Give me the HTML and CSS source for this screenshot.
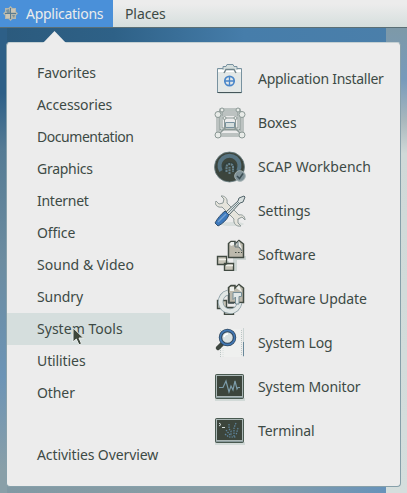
FILE: index.html
```html
<!DOCTYPE html>
<html lang="en">
<head>
<meta charset="utf-8">
<title>Applications</title>
<link rel="stylesheet" href="styles.css">
</head>
<body>
<header class="topbar">
  <div class="tab active">
    <svg class="logo" width="15" height="15" viewBox="0 0 15 15"><path d="M7.500 0 9.500 2H13V5.500L15 7.500 13 9.500V13H9.500L7.500 15 5.500 13H2V9.500L0 7.500 2 5.500V2H5.500Z" fill="#b4b7ad"/><path d="M7.500 2V13M2 7.500H13" stroke="#5b7c90" stroke-width="1"/><path d="M3 8H7V12H3ZM8 3H12V6H8Z" fill="#c9c5b8"/><path d="M3 4 6 3 7 7 4 7ZM9 9 12 9 11 12Z" fill="#7892a0"/></svg>
    <span class="tight">Applications</span>
  </div>
  <div class="tab places"><span>Places</span></div>
</header>
<main class="desktop">
  <div class="window-edge"></div>
  <section class="menu">
    <svg class="pointer" width="26" height="13" viewBox="0 0 26 13"><path d="M0 13 12.500 0 25 13Z" fill="#ececec"/></svg>
    <nav class="categories">
      <div class="cat">Favorites</div>
      <div class="cat">Accessories</div>
      <div class="cat tighter">Documentation</div>
      <div class="cat tight">Graphics</div>
      <div class="cat tight">Internet</div>
      <div class="cat">Office</div>
      <div class="cat loose">Sound &amp; Video</div>
      <div class="cat">Sundry</div>
      <div class="cat selected loose">System Tools
        <svg class="cursor" width="12" height="19" viewBox="0 0 12 19"><path d="M1 .8V15L4.300 12 7 17.800 9.500 16.700 7 11H11.500Z" fill="#3d463b" stroke="#e9eded" stroke-width="1"/></svg>
      </div>
      <div class="cat">Utilities</div>
      <div class="cat">Other</div>
      <div class="cat overview">Activities Overview</div>
    </nav>
    <div class="apps">
      <div class="app">
        <svg class="icon" viewBox="0 0 32 32"><path d="M3 28H29L27 31H5Z" fill="#d5dedd"/><path d="M3.500 5.500H27.500V29.500H3.500Z" fill="#e3e8e7" stroke="#7892a0"/><path d="M4 8H27" stroke="#fff" stroke-width="2"/><path d="M3.500 29.500H27.500" stroke="#46565a"/><path d="M9 6.500V3.500H12L13 1.500H19L20 3.500H23V6.500" fill="#d5dedd" stroke="#7892a0"/><path d="M10 10 12 6.500H20L22 10" fill="none" stroke="#71858c" stroke-width="1.500"/><circle cx="15.500" cy="18" r="4.700" fill="#e1e7e8" stroke="#4a87c9" stroke-width="1.700"/><path d="M15.500 13V23M10.500 18H20.500" stroke="#4a87c9" stroke-width="1.300"/></svg>
        <span class="tight">Application Installer</span>
      </div>
      <div class="app">
        <svg class="icon" viewBox="0 0 32 32"><g fill="none" stroke="#8b9895"><path d="M4 7V28H28V7Z" stroke-width="3"/><path d="M4 7V28H28V7Z" stroke="#ececec"/><path d="M7 3H25V22H7Z" stroke-width="3"/><path d="M7 3H25V22H7Z" stroke="#e8ecea"/><path d="M10.500 11H21.500V22.500H10.500Z"/><path d="M11.500 15.500H20.500V20.500H11.500Z" fill="#d5dedd" stroke="#7892a0"/><path d="M3 7 7 3M29 7 25 3M4 28 12 20M28 28 20 20" stroke-width="1.500"/></g><g fill="#e8ebe8" stroke="#8b9895"><circle cx="4" cy="7.500" r="3"/><circle cx="28" cy="7.500" r="3"/><circle cx="4" cy="28" r="3"/><circle cx="28" cy="28" r="3"/><circle cx="8" cy="3" r="2"/><circle cx="24" cy="3" r="2"/><circle cx="10.500" cy="11" r="1.500"/><circle cx="21.500" cy="11" r="1.500"/></g></svg>
        <span>Boxes</span>
      </div>
      <div class="app">
        <svg class="icon" viewBox="0 0 32 32"><circle cx="15.500" cy="16" r="15" fill="#3c453d" stroke="#687d83" stroke-width=".8"/><path d="M7 20A10 10 0 1 1 24 20" fill="none" stroke="#577482" stroke-width="4"/><path d="M10.500 21A6 6 0 1 1 20.500 21" fill="none" stroke="#303f3e" stroke-width="2"/><path d="M12.500 21V15.500A3.500 3.500 0 0 1 19 15V21M15.500 23V16" fill="none" stroke="#66828d" stroke-width="2" stroke-dasharray="2 .7"/><circle cx="26" cy="25" r="5.300" fill="#7f9197" stroke="#a5b3b4"/><path d="M23 25 25.500 27.500 29 22.500" fill="none" stroke="#3c4e53" stroke-width="1.500"/></svg>
        <span class="loose">SCAP Workbench</span>
      </div>
      <div class="app">
        <svg class="icon" viewBox="0 0 32 32"><ellipse cx="18" cy="29" rx="12" ry="2" fill="#d9dfdd"/><path d="M2 6 5 9 9 8 10 4 7 1C10 .5 14 3 13 8L25 20C29 19 31 22 31 25L28 22 24 24 24 28 27 31C22 32 19 28 20 24L8 12C4 13 0 10 2 6Z" fill="#e5e4dc" stroke="#8e9998"/><path d="M12 17 24 6 25 3 30 1 31 2 29 7 26 8 15 20Z" fill="#d8e0df" stroke="#53646a"/><path d="M14 18 25 7" stroke="#71858c"/><path d="M11 16 15 20C13 25 8 29 4 31L1 28C3 24 7 19 11 16Z" fill="#3d79bd" stroke="#34516f"/><path d="M4 27 12 19" stroke="#75a1d1" stroke-width="1.500"/></svg>
        <span>Settings</span>
      </div>
      <div class="app">
        <svg class="icon" viewBox="0 0 32 32"><path d="M4 24H13V30H21V19H30V17" fill="none" stroke="#ced6d4" stroke-width="4"/><path d="M14.500 4.500 17 2.500H21V5L25 1.500 29.500 5V18.500H14.500Z" fill="#bcb9ac" stroke="#414a42" stroke-width="1.500"/><path d="M15.500 5 17 3H20V6L17 7ZM22 5 25 2 28 10Z" fill="#edf0ed"/><path d="M21 3V8H25L28 12M24 3V7" fill="none" stroke="#65777c"/><path d="M21 13.500H28" stroke="#414a42" stroke-dasharray="1.500 1.500"/><path d="M3.500 17.500H12.500V25.500H3.500ZM10.500 24.500H19.500V31.500H10.500Z" fill="#c7c4b8" stroke="#414a42" stroke-width="1.400"/><path d="M5 20.500H12M12 26.500H19" stroke="#f0f0e9" stroke-width="1.500"/></svg>
        <span>Software</span>
      </div>
      <div class="app">
        <svg class="icon" viewBox="0 0 32 32"><path d="M14.500 4.500 17 2.500H21V5L25 1.500 29.500 5V19.500H14.500Z" fill="#bcb9ac" stroke="#414a42" stroke-width="1.500"/><path d="M22 5 25 2 28 9ZM16 4H20V8H16Z" fill="#edf0ed"/><path d="M3.500 17.500H12.500V25.500H3.500ZM10.500 24.500H19.500V31.500H10.500Z" fill="#c7c4b8" stroke="#414a42" stroke-width="1.400"/><path d="M14 9.500A9.500 9.500 0 1 0 25.500 20" fill="none" stroke="#8498a0" stroke-width="5.500"/><path d="M14 9.500A9.500 9.500 0 1 0 25.500 20" fill="none" stroke="#e1e7e6" stroke-width="4"/><path d="M15 10V20H20" fill="none" stroke="#465455" stroke-width="1.500"/><path d="M19 9.500H27.500V13.500H25V21H21.500V14L19 16.500Z" fill="#e1e7e6" stroke="#768e98"/></svg>
        <span>Software Update</span>
      </div>
      <div class="app">
        <svg class="icon" viewBox="0 0 32 32"><path d="M7 2H27V30H7Z" fill="#eff0ef"/><path d="M29.500 1V30" stroke="#cbd4d3"/><path d="M29.500 15V29" stroke="#688799"/><path d="M6.500 3V30M27.500 3V29" stroke="#bbc6c4" stroke-dasharray="1 1"/><path d="M9 3V30" stroke="#d8dfde" stroke-dasharray="1 1"/><path d="M4 21 9 16" stroke="#3d463f" stroke-width="4.500" stroke-linecap="round"/><circle cx="13.500" cy="10.500" r="7" fill="#d9e1e3" stroke="#31475c" stroke-width="3.500"/><circle cx="13.500" cy="10.500" r="7.200" fill="none" stroke="#4278b5" stroke-width="1.700"/><path d="M10 10A4 4 0 0 1 14 7" fill="none" stroke="#fff" stroke-width="1.500"/></svg>
        <span>System Log</span>
      </div>
      <div class="app">
        <svg class="icon" viewBox="0 0 32 32"><path d="M1 27H31V30H1Z" fill="#d2dad8"/><rect x="1.500" y="3.500" width="28" height="24" rx="1" fill="#3c453c" stroke="#495950"/><rect x="2.500" y="4.500" width="26" height="21" fill="none" stroke="#aab7b6"/><path d="M2 26.500H29" stroke="#89999b"/><path d="M5 16.500H9L12 10 15 21 17 15 19 19 21 10 23 18 24 16.500H26" fill="none" stroke="#7c9ca9" stroke-width="1.200"/></svg>
        <span>System Monitor</span>
      </div>
      <div class="app">
        <svg class="icon" viewBox="0 0 32 32"><path d="M1 27H31V30H1Z" fill="#d2dad8"/><rect x="1.500" y="3.500" width="28" height="24" rx="1" fill="#3c453c" stroke="#495950"/><rect x="2.500" y="4.500" width="26" height="21" fill="none" stroke="#aab7b6"/><path d="M2 26.500H29" stroke="#89999b"/><path d="M5 8 7 9.500 5 11M8 12.500H11" fill="none" stroke="#d5dedd"/><path d="M15 9V14L17 16V21M22 8 20 13V22M12 15 16 20M24 13 22 20M11 19 15 22M15 22H22" fill="none" stroke="#5f87a0" stroke-width="1.200" stroke-dasharray="1.500 1"/></svg>
        <span>Terminal</span>
      </div>
    </div>
  </section>
</main>
</body>
</html>
```
FILE: styles.css
```css
* { box-sizing: border-box; }
body {
  margin: 0;
  width: 407px;
  height: 493px;
  overflow: hidden;
  display: flex;
  flex-direction: column;
  font: 14px/20px "Noto Sans", "Open Sans", sans-serif;
  letter-spacing: -0.1px;
  color: #3d4a45;
}
.tight { letter-spacing: -0.27px; }
.tighter { letter-spacing: -0.45px; }
.loose { letter-spacing: 0.03px; }
.topbar {
  height: 28px;
  flex: none;
  display: flex;
  background: linear-gradient(#ececec 15%, #d5dedd);
  border-bottom: 1px solid #5b6f75;
}
.tab { display: flex; align-items: center; white-space: nowrap; }
.active {
  width: 113px;
  padding-left: 3px;
  gap: 8px;
  background: #4a90d9;
  color: #ececec;
}
.places { padding-left: 12px; }
.desktop {
  flex: 1;
  position: relative;
  padding: 14px 6px 6px;
  background:
    linear-gradient(#2d5f87 14%, #557b94 26%, #6c8ca0 50%, #6c94b6 75%, #899fa8 95%) 0 0 / 7px 100% no-repeat,
    linear-gradient(90deg, #8199a4, #899ea5 60%, #6291bd) 0 100% / 100% 8px no-repeat,
    linear-gradient(90deg, #2b5a7d, #2e6187 28%, #467daa 60%, #4b7faa);
}
.window-edge {
  position: absolute;
  top: 0;
  right: 0;
  bottom: 0;
  width: 21px;
  background: linear-gradient(#7d99a8, #779abb 11%, #a9b8bd 20%, #d0d9d8 27%, #d5dedd);
}
.menu {
  position: relative;
  width: 395px;
  height: 445px;
  padding-top: 14px;
  display: flex;
  background: #ececec;
  border: 1px solid #87a0aa;
  border-top-color: #c5d0d2;
  border-radius: 4px;
}
.pointer { position: absolute; left: 35px; top: -12px; }
.categories { width: 163px; }
.cat { position: relative; height: 32px; padding: 6px 0 6px 30px; white-space: nowrap; }
.selected { background: #d5dedd; }
.cursor { position: absolute; left: 65px; top: 14px; }
.overview { margin-top: 30px; }
.apps { padding-left: 44px; }
.app { height: 44px; display: flex; align-items: center; gap: 12px; white-space: nowrap; }
.icon { width: 32px; height: 32px; flex: none; }
```
